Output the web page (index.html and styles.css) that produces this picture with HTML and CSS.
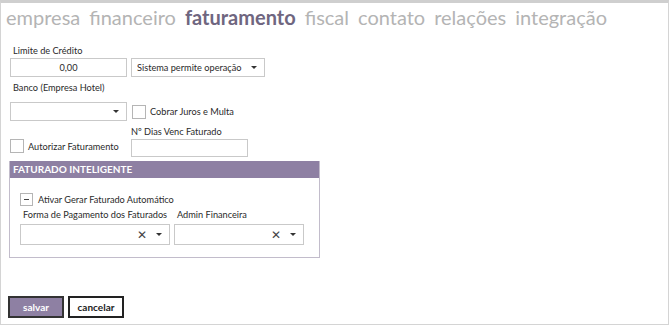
FILE: index.html
```html
<!DOCTYPE html>
<html lang="pt-BR">
<head>
  <meta charset="UTF-8" />
  <title>Faturamento</title>
  <link rel="stylesheet" href="styles.css">
</head>
<body>
  <div class="frame">
    <nav class="tabs">
      <span class="tab">empresa</span>
      <span class="tab">financeiro</span>
      <span class="tab active">faturamento</span>
      <span class="tab">fiscal</span>
      <span class="tab">contato</span>
      <span class="tab">relações</span>
      <span class="tab">integração</span>
    </nav>

    <div class="form">
      <label class="label">Limite de Crédito</label>
      <div class="row r1">
        <input class="input num" type="text" value="0,00">
        <div class="select wide">
          <span class="value">Sistema permite operação</span>
          <span class="caret"></span>
        </div>
      </div>

      <label class="label banco">Banco (Empresa Hotel)</label>
      <div class="row r2">
        <div class="select">
          <span class="value"></span>
          <span class="caret"></span>
        </div>
        <div class="check">
          <span class="box"></span>
          <span>Cobrar Juros e Multa</span>
        </div>
      </div>

      <div class="row r3">
        <div class="check col">
          <span class="box"></span>
          <span>Autorizar Faturamento</span>
        </div>
        <div class="field">
          <label class="label plain">Nº Dias Venc Faturado</label>
          <input class="input" type="text">
        </div>
      </div>

      <div class="panel">
        <div class="panel-head">FATURADO INTELIGENTE</div>
        <div class="panel-body">
          <div class="check auto">
            <span class="box minus"></span>
            <span>Ativar Gerar Faturado Automático</span>
          </div>
          <div class="row combos">
            <div class="field pay">
              <label class="label">Forma de Pagamento dos Faturados</label>
              <div class="combo">
                <span class="clear">&#x2715;</span>
                <span class="caret"></span>
              </div>
            </div>
            <div class="field admin">
              <label class="label">Admin Financeira</label>
              <div class="combo">
                <span class="clear">&#x2715;</span>
                <span class="caret"></span>
              </div>
            </div>
          </div>
        </div>
      </div>
    </div>

    <div class="actions">
      <button class="btn primary">salvar</button>
      <button class="btn">cancelar</button>
    </div>
  </div>
</body>
</html>
```

FILE: styles.css
```css
html, body {
  margin: 0;
  background: #fff;
  font-family: Lato, "Open Sans", sans-serif;
  color: #2a2a2a;
}
.frame {
  box-sizing: border-box;
  width: 669px;
  height: 325px;
  border: 1px solid #d4d4d4;
  border-top: 3px solid #cfcfcf;
  display: flex;
  flex-direction: column;
}
.tabs {
  display: flex;
  gap: 9px;
  padding: 1px 0 0 5px;
  font-size: 20px;
  line-height: 26px;
  color: #b4b4b4;
  white-space: nowrap;
}
.tab.active {
  color: #6f6680;
  font-weight: 700;
}
.form {
  padding: 14px 0 0 9px;
  font-size: 9.2px;
  white-space: nowrap;
}
.label {
  display: block;
  font-size: 9.2px;
  line-height: 14px;
  padding-left: 3px;
  margin-bottom: 0;
}
.label.banco {
  margin-bottom: 7px;
}
.label.plain {
  padding-left: 0;
}
.row {
  display: flex;
  gap: 4px;
  align-items: center;
  margin-bottom: 4px;
}
.row > * {
  flex: none;
}
.row.r3 {
  align-items: flex-end;
  margin-bottom: 0;
}
.input {
  box-sizing: border-box;
  width: 117px;
  height: 19px;
  border: 1px solid #c9c9c9;
  font: inherit;
  font-size: 9.2px;
  color: #2a2a2a;
  padding: 0 4px;
  margin: 0;
  outline: none;
}
.r3 .input {
  height: 18px;
}
.input.num {
  text-align: center;
}
.select {
  box-sizing: border-box;
  width: 117px;
  height: 19px;
  border: 1px solid #c9c9c9;
  display: flex;
  align-items: center;
  padding: 0 7px 0 5px;
}
.select .value {
  flex: 1;
}
.select.wide {
  width: 134px;
}
.caret {
  flex: none;
  width: 0;
  height: 0;
  border-left: 3px solid transparent;
  border-right: 3px solid transparent;
  border-top: 3px solid #333;
}
.check {
  display: flex;
  align-items: center;
  gap: 4px;
}
.r2 .check {
  margin-left: 1px;
}
.check.col {
  width: 117px;
  margin-bottom: 4px;
}
.box {
  flex: none;
  box-sizing: border-box;
  width: 14px;
  height: 14px;
  border: 1px solid #b5b5b5;
  background: #fff;
  position: relative;
}
.check.auto {
  height: 14px;
  gap: 5px;
}
.box.minus {
  width: 13px;
  height: 13px;
}
.box.minus::after {
  content: "";
  position: absolute;
  left: 3px;
  right: 3px;
  top: 5px;
  height: 1px;
  background: #444;
}
.panel {
  width: 311px;
  box-sizing: border-box;
  margin: 4px 0 0 -1px;
  border: 1px solid #c2bccb;
  border-top: none;
}
.panel-head {
  background: #8e80a3;
  color: #fff;
  font-size: 10px;
  font-weight: 700;
  line-height: 17px;
  padding-left: 3px;
}
.panel-body {
  padding: 14px 0 12px 10px;
}
.row.combos {
  margin: 2px 0 0 0;
  gap: 4px;
  align-items: flex-start;
}
.combos .label {
  margin-bottom: 2px;
}
.field.pay {
  width: 150px;
}
.field.admin {
  width: 130px;
}
.combo {
  box-sizing: border-box;
  width: 100%;
  height: 21px;
  border: 1px solid #c9c9c9;
  display: flex;
  align-items: center;
  justify-content: flex-end;
  gap: 9px;
  padding-right: 7px;
}
.clear {
  font-size: 12px;
  color: #444;
  line-height: 1;
}
.actions {
  margin: auto 0 6px 7px;
  display: flex;
  gap: 4px;
}
.btn {
  box-sizing: border-box;
  width: 56px;
  height: 22px;
  border: 2px solid #222;
  background: #fff;
  font-family: inherit;
  font-size: 10px;
  font-weight: 700;
  color: #222;
  padding: 0;
}
.btn.primary {
  background: #8e80a3;
  color: #fff;
  border-color: #333;
}
```
